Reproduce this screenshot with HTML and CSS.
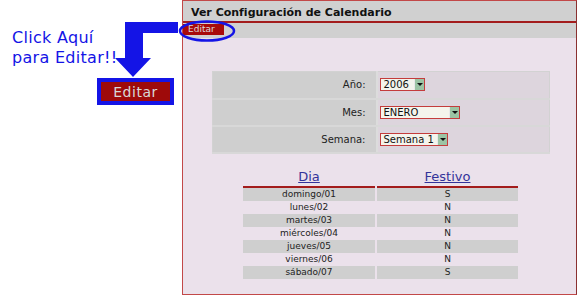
FILE: index.html
```html
<!DOCTYPE html>
<html lang="es">
<head>
    <meta charset="UTF-8">
    <title>Ver Configuración de Calendario</title>
    <link rel="stylesheet" href="styles.css">
</head>
<body>
    <div class="page">
        <div class="note">
            <p class="note-text">Click Aquí<br>para Editar!!</p>
            <div class="big-btn"><span>Editar</span></div>
        </div>

        <div class="panel">
            <div class="panel-title">Ver Configuración de Calendario</div>
            <div class="toolbar"><span class="small-btn">Editar</span></div>

            <div class="content">
                <table class="form">
                    <tr>
                        <td class="label">Año:</td>
                        <td class="value"><div class="select w-year"><span>2006</span><i class="arrow"></i></div></td>
                    </tr>
                    <tr>
                        <td class="label">Mes:</td>
                        <td class="value"><div class="select w-month"><span>ENERO</span><i class="arrow"></i></div></td>
                    </tr>
                    <tr>
                        <td class="label">Semana:</td>
                        <td class="value"><div class="select w-week"><span>Semana 1</span><i class="arrow"></i></div></td>
                    </tr>
                </table>

                <table class="days">
                    <thead>
                        <tr><th class="col-day"><a href="#">Dia</a></th><th class="col-hol"><a href="#">Festivo</a></th></tr>
                    </thead>
                    <tbody>
                        <tr class="odd"><td>domingo/01</td><td>S</td></tr>
                        <tr><td>lunes/02</td><td>N</td></tr>
                        <tr class="odd"><td>martes/03</td><td>N</td></tr>
                        <tr><td>miércoles/04</td><td>N</td></tr>
                        <tr class="odd"><td>jueves/05</td><td>N</td></tr>
                        <tr><td>viernes/06</td><td>N</td></tr>
                        <tr class="odd"><td>sábado/07</td><td>S</td></tr>
                    </tbody>
                </table>
            </div>
        </div>

        <svg class="marks" width="578" height="296" viewBox="0 0 578 296">
            <path d="M125 22 H178 V33 H143 V58 H151 L133 77 L115 58 H125 Z" fill="#1414e6"/>
            <ellipse cx="207" cy="31" rx="27" ry="9.5" fill="none" stroke="#1414e6" stroke-width="2.5"/>
        </svg>
    </div>
</body>
</html>
```

FILE: styles.css
```css
* {
    margin: 0;
    padding: 0;
    box-sizing: border-box;
}
body {
    background: #ffffff;
    font-family: "DejaVu Sans", Verdana, sans-serif;
    color: #222;
}
.page {
    position: relative;
    display: flex;
    width: 578px;
    height: 296px;
}
.note {
    width: 182px;
    padding: 28px 0 0 12px;
}
.note-text {
    font-size: 16px;
    line-height: 20px;
    color: #1414e6;
    letter-spacing: 0.3px;
}
.big-btn {
    margin: 10px 0 0 85px;
    width: 77px;
    height: 27px;
    border: 4px solid #1414e6;
    background: #9e0a0a;
    display: flex;
    align-items: center;
    justify-content: center;
}
.big-btn span {
    color: #d8d8d8;
    font-size: 14px;
    letter-spacing: 0.5px;
}
.panel {
    width: 395px;
    height: 295px;
    border: 1px solid #c24848;
    border-right-color: #8a3030;
    background: #ebe1eb;
}
.panel-title {
    height: 22px;
    background: #d0d0d0;
    border-bottom: 2px solid #a31c1c;
    font-size: 11px;
    font-weight: bold;
    color: #111;
    padding: 5px 0 0 8px;
}
.toolbar {
    display: flex;
    align-items: flex-start;
    height: 15px;
    background: #d0d0d0;
    padding-top: 1px;
}
.small-btn {
    display: block;
    width: 41px;
    height: 11px;
    background: #a80a0a;
    color: #dcdcdc;
    font-size: 9px;
    line-height: 11px;
    padding-left: 5px;
}
.content {
    padding-top: 33px;
}
.form {
    margin-left: 29px;
    width: 338px;
    border-collapse: collapse;
    border: 1px solid #d2d2d2;
}
.form td {
    height: 27px;
    border-bottom: 2px solid #d8d8d8;
    font-size: 10px;
}
.form .label {
    width: 164px;
    background: #cfcfcf;
    text-align: right;
    padding-right: 10px;
    border-right: 2px solid #dcdcdc;
}
.form .value {
    background: #ddd5dd;
    padding-left: 2px;
}
.select {
    display: flex;
    align-items: center;
    height: 13px;
    border: 1px solid #c43c3c;
    background: #f4f4ec;
    font-size: 10px;
    color: #111;
}
.select span {
    flex: 1;
    padding-left: 3px;
    line-height: 11px;
}
.select .arrow {
    position: relative;
    width: 10px;
    height: 11px;
    background: #9cc4a4;
    border-left: 1px solid #e8e8e8;
}
.select .arrow::after {
    content: "";
    position: absolute;
    left: 2px;
    top: 4px;
    border-left: 3px solid transparent;
    border-right: 3px solid transparent;
    border-top: 3px solid #111;
}
.w-year { width: 45px; }
.w-month { width: 80px; }
.w-week { width: 68px; }
.days {
    margin: 13px 0 0 58px;
    width: 279px;
    border-collapse: separate;
    border-spacing: 2px 0;
}
.days th {
    height: 21px;
    font-size: 13px;
    font-weight: normal;
    border-bottom: 2px solid #a31c1c;
    vertical-align: middle;
}
.days th a {
    color: #33339a;
}
.days .col-day { width: 132px; }
.days td {
    height: 13px;
    font-size: 9px;
    line-height: 13px;
    text-align: center;
    color: #222;
}
.days tr.odd td {
    background: #cfcfcf;
}
.marks {
    position: absolute;
    left: 0;
    top: 0;
    pointer-events: none;
}
```
